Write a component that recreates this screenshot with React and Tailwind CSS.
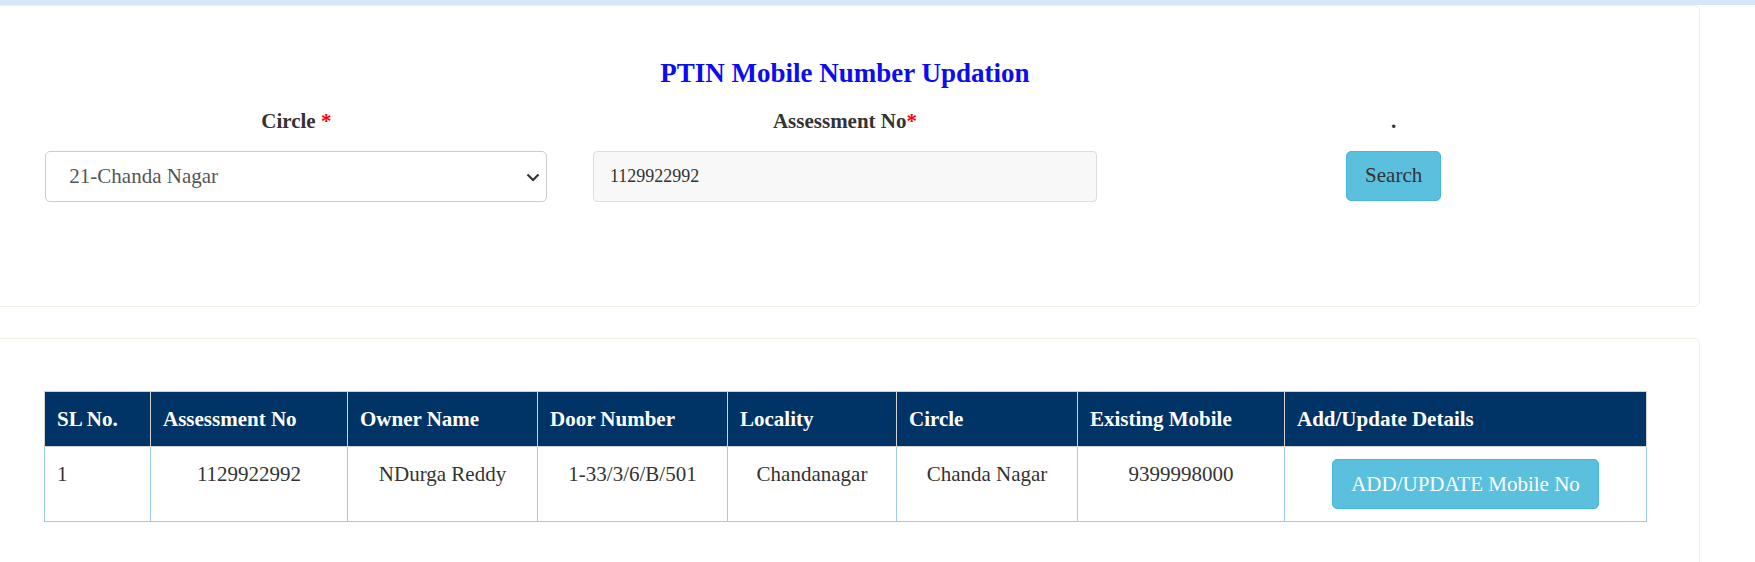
import React, { useState } from "react";

const rows = [
  {
    sl: 1,
    assessmentNo: "1129922992",
    owner: "NDurga Reddy",
    door: "1-33/3/6/B/501",
    locality: "Chandanagar",
    circle: "Chanda Nagar",
    mobile: "9399998000",
  },
];

// column widths taken from the screenshot
const cols = [106, 197, 190, 190, 169, 181, 207, 362];
const heads = [
  "SL No.",
  "Assessment No",
  "Owner Name",
  "Door Number",
  "Locality",
  "Circle",
  "Existing Mobile",
  "Add/Update Details",
];

const App = () => {
  const [circle, setCircle] = useState("21");
  const [assessment, setAssessment] = useState("1129922992");

  return (
    <div className="h-[562px] overflow-hidden bg-white font-['Liberation_Serif',serif] text-[#333]">
      <div className="h-[5px] bg-[#d4e7fb]" />

      {/* search card */}
      <div className="-ml-[10px] w-[1710px] h-[302px] border border-[#efefe8] rounded-[6px] pt-[52px]">
        <h2 className="text-center text-[27px] leading-[31px] font-bold text-[#0c0cf0]">
          PTIN Mobile Number Updation
        </h2>

        <div className="grid grid-cols-3 px-[31px] mt-[20px]">
          <div className="flex flex-col items-center">
            <label className="text-[21px] leading-[24px] font-bold">
              Circle <span className="text-[#ff0000]">*</span>
            </label>
            <div className="relative mt-[18px] w-[502px] h-[51px]">
              <select
                value={circle}
                onChange={(e) => setCircle(e.target.value)}
                className="appearance-none w-full h-full bg-white border border-[#cccccc] rounded-[5px] pl-[23px] text-[21px] text-[#555] outline-none"
              >
                <option value="21">21-Chanda Nagar</option>
              </select>
              <svg
                width="14"
                height="9"
                viewBox="0 0 14 9"
                className="absolute right-[7px] top-[22px] pointer-events-none"
              >
                <path d="M1.5 1.5l5.5 5.5 5.5-5.5" fill="none" stroke="#333" strokeWidth="2.2" />
              </svg>
            </div>
          </div>

          <div className="flex flex-col items-center">
            <label className="text-[21px] leading-[24px] font-bold">
              Assessment No<span className="text-[#ff0000]">*</span>
            </label>
            <input
              type="text"
              value={assessment}
              onChange={(e) => setAssessment(e.target.value)}
              className="mt-[18px] w-[504px] h-[51px] bg-[#f8f8f8] border border-[#dddddd] rounded-[4px] pl-[16px] text-[18px] text-[#333] outline-none"
            />
          </div>

          <div className="flex flex-col items-center">
            <label className="text-[21px] leading-[24px] font-bold">.</label>
            <button className="mt-[18px] h-[50px] px-[18px] bg-[#5bc0de] border border-[#46b8da] rounded-[5px] text-[21px] text-[#333]">
              Search
            </button>
          </div>
        </div>
      </div>

      {/* result card */}
      <div className="-ml-[10px] w-[1710px] h-[260px] mt-[31px] border border-[#f1f1e6] rounded-[6px] pt-[52px] pl-[53px]">
        <table className="table-fixed border-collapse w-[1602px] text-[21px] leading-[30px]">
          <colgroup>
            {cols.map((w, i) => (
              <col key={i} style={{ width: w }} />
            ))}
          </colgroup>
          <thead>
            <tr>
              {heads.map((h) => (
                <th
                  key={h}
                  className="bg-[#003366] text-white font-bold text-left px-[12px] py-[12px] border border-[#d2d2d2]"
                >
                  {h}
                </th>
              ))}
            </tr>
          </thead>
          <tbody>
            {rows.map((r) => (
              <tr key={r.sl}>
                <td className="align-top text-left px-[12px] pt-[12px] border border-[#9fcbef]">{r.sl}</td>
                <td className="align-top text-center px-[12px] pt-[12px] border border-[#9fcbef]">{r.assessmentNo}</td>
                <td className="align-top text-center px-[12px] pt-[12px] border border-[#9fcbef]">{r.owner}</td>
                <td className="align-top text-center px-[12px] pt-[12px] border border-[#9fcbef]">{r.door}</td>
                <td className="align-top text-center px-[12px] pt-[12px] border border-[#9fcbef]">{r.locality}</td>
                <td className="align-top text-center px-[12px] pt-[12px] border border-[#9fcbef]">{r.circle}</td>
                <td className="align-top text-center px-[12px] pt-[12px] border border-[#9fcbef]">{r.mobile}</td>
                <td className="align-top text-center px-[12px] py-[12px] border border-[#9fcbef]">
                  <button className="bg-[#5bc0de] border border-[#46b8da] rounded-[5px] px-[18px] py-[9px] text-white">
                    ADD/UPDATE Mobile No
                  </button>
                </td>
              </tr>
            ))}
          </tbody>
        </table>
      </div>
    </div>
  );
};

export default App;
